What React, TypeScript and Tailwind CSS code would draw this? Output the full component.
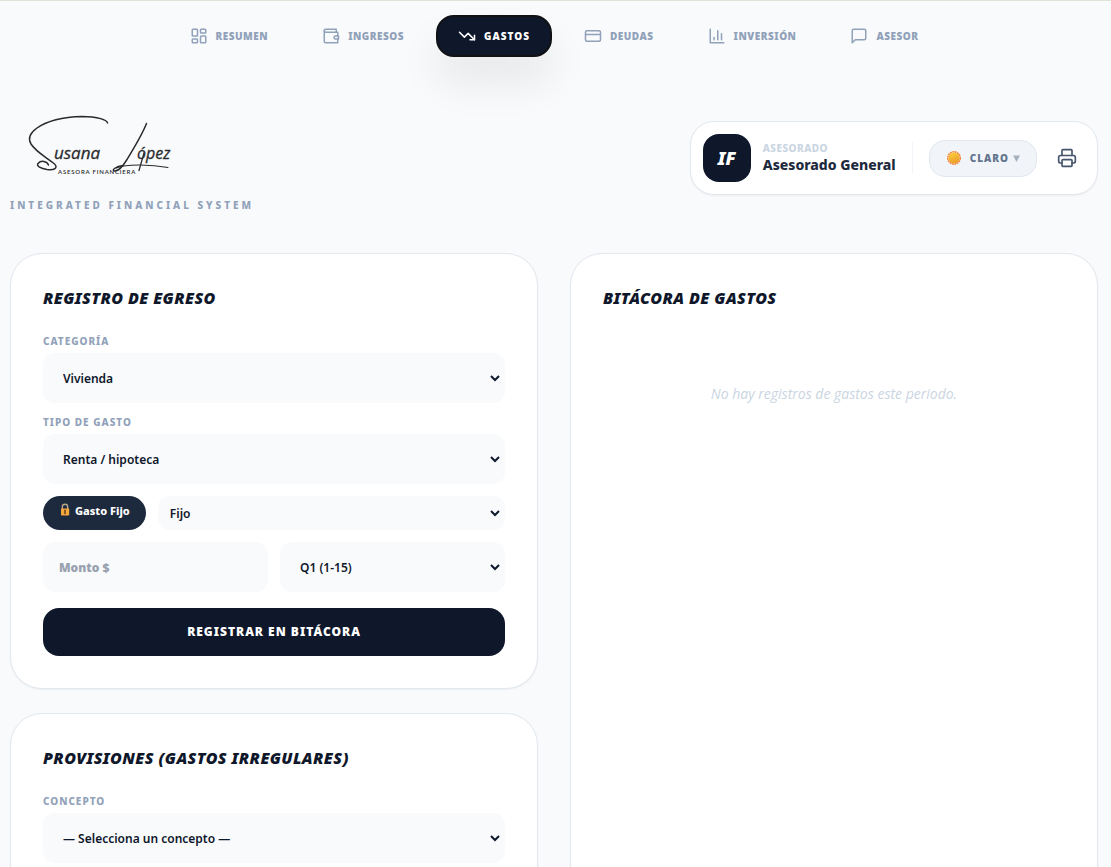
import type { ReactNode } from "react";
import { CreditCard, LayoutDashboard, Printer, TrendingDown } from "lucide-react";

const iconProps = {
  width: 18,
  height: 18,
  viewBox: "0 0 24 24",
  fill: "none",
  stroke: "currentColor",
  strokeWidth: 2,
  strokeLinecap: "round" as const,
  strokeLinejoin: "round" as const,
  "aria-hidden": true,
};

function WalletIcon() {
  return (
    <svg {...iconProps}>
      <path d="M21 12V7H5a2 2 0 0 1 0-4h14v4" />
      <path d="M3 5v14a2 2 0 0 0 2 2h16v-5" />
      <path d="M18 12a2 2 0 0 0 0 4h4v-4Z" />
    </svg>
  );
}

function ChartIcon() {
  return (
    <svg {...iconProps}>
      <path d="M3 3v18h18" />
      <path d="M8 17v-3" />
      <path d="M13 17V5" />
      <path d="M18 17V9" />
    </svg>
  );
}

function MessageIcon() {
  return (
    <svg {...iconProps}>
      <path d="M21 15a2 2 0 0 1-2 2H7l-4 4V5a2 2 0 0 1 2-2h14a2 2 0 0 1 2 2z" />
    </svg>
  );
}

function SunIcon() {
  return (
    <svg width="16" height="16" viewBox="0 0 16 16" aria-hidden="true">
      <defs>
        <linearGradient id="sun" x1="0" y1="0" x2="0.4" y2="1">
          <stop offset="0" stopColor="#fdd23c" />
          <stop offset="1" stopColor="#eba02c" />
        </linearGradient>
      </defs>
      <circle cx="8" cy="8" r="6.2" fill="none" stroke="#f5843a" strokeWidth="1.6" strokeDasharray="1.9 0.535" />
      <circle cx="8" cy="8" r="5.6" fill="url(#sun)" />
    </svg>
  );
}

function LockIcon() {
  return (
    <svg width="12" height="14" viewBox="0 0 12 14" aria-hidden="true">
      <path d="M3.3 6V4a2.7 2.7 0 0 1 5.4 0v2" fill="none" stroke="#b9a58c" strokeWidth="1.4" />
      <rect x="2" y="5.4" width="8.2" height="7.2" rx="0.8" fill="#f5a83c" />
      <path d="M6 7.4v3" stroke="#6b4420" strokeWidth="1.6" strokeLinecap="round" />
    </svg>
  );
}

function Logo() {
  return (
    <svg width="176" height="90" viewBox="0 0 176 90" role="img" aria-label="Susana López, asesora financiera">
      <g fill="none" stroke="#2b2b2d" strokeLinecap="round" strokeLinejoin="round">
        <path
          strokeWidth="1.5"
          d="M97.500 20C97 17 88 13.500 72 13.500C54 14 37 18 27 25C20 30 17.500 35 21 41C26 49 36 54 44 60.500C49 65 44 67.500 37 66.500C31 65.500 26 63 28 60.500C31 57 37 58 38.500 62"
        />
        <path
          strokeWidth="1.5"
          d="M136.500 20.500C132 32 124 45 117 56.500C113 63 108 68.500 104.500 68C101 67 106 63.500 113 62.500"
        />
        <path strokeWidth="1.1" d="M106 65C116 61 140 61 158 64.500" />
        <path strokeWidth="1.3" d="M134 50L129 67.500" />
      </g>
      <g fill="#2b2b2d" stroke="#2b2b2d" strokeWidth="0.3" className="italic [font-family:'Open_Sans',sans-serif]">
        <text x="44" y="56" fontSize="17">usana</text>
        <text x="127" y="56" fontSize="16">ópez</text>
      </g>
      <text x="48" y="71" fontSize="6" letterSpacing="0.8" fill="#2b2b2d" className="font-semibold [font-family:Lato,sans-serif]">
        ASESORA FINANCIERA
      </text>
    </svg>
  );
}

const tabs: { label: string; icon: ReactNode; active?: boolean }[] = [
  { label: "Resumen", icon: <LayoutDashboard size={18} /> },
  { label: "Ingresos", icon: <WalletIcon /> },
  { label: "Gastos", icon: <TrendingDown size={18} />, active: true },
  { label: "Deudas", icon: <CreditCard size={18} /> },
  { label: "Inversión", icon: <ChartIcon /> },
  { label: "Asesor", icon: <MessageIcon /> },
];

function Card({ title, children }: { title: string; children?: ReactNode }) {
  return (
    <section className="rounded-[32px] border border-slate-200 bg-white p-8 shadow-[0_1px_2px_0_rgba(0,0,0,0.05)]">
      <h2 className="mb-6 text-base leading-6 font-black tracking-wide text-slate-900 uppercase italic">{title}</h2>
      {children}
    </section>
  );
}

function SelectField({ id, label, options }: { id: string; label: string; options: string[] }) {
  return (
    <div className="flex flex-col gap-1">
      <label htmlFor={id} className="text-[10px] leading-[15px] font-extrabold tracking-[1px] text-slate-400 uppercase">
        {label}
      </label>
      <select
        id={id}
        className="h-[50px] w-full rounded-xl border-r-2 border-transparent bg-slate-50 px-4 text-xs font-semibold text-slate-900"
      >
        {options.map((o) => (
          <option key={o}>{o}</option>
        ))}
      </select>
    </div>
  );
}

export default function App() {
  return (
    <div className="min-h-screen border-t border-[#dfe3d3] bg-slate-50 pr-[13px] pl-2.5 text-slate-900 [font-family:'Noto_Sans','Open_Sans',sans-serif]">
      <nav className="flex justify-center gap-2.5 pt-3.5">
        {tabs.map((t) => (
          <button
            key={t.label}
            type="button"
            className={
              t.active
                ? "flex h-[42px] items-center gap-2 rounded-[18px] border-2 border-[#101114] bg-slate-900 px-5 text-[10px] font-black tracking-[1px] text-white uppercase shadow-[0_25px_40px_0_rgba(0,0,0,0.08)]"
                : "flex h-[42px] items-center gap-2 rounded-[18px] border-2 border-transparent px-5 text-[10px] font-black tracking-wider text-slate-400 uppercase"
            }
          >
            {t.icon}
            {t.label}
          </button>
        ))}
      </nav>

      <header className="mt-[46px] flex items-center justify-between">
        <div className="flex flex-col gap-[5px]">
          <Logo />
          <p className="text-[10px] leading-[15px] font-extrabold tracking-[3px] text-slate-400 uppercase">
            Integrated Financial System
          </p>
        </div>
        <div className="flex items-center rounded-3xl border border-slate-200 bg-white p-3 shadow-[0_1px_2px_0_rgba(0,0,0,0.05)]">
          <div className="flex size-12 items-center justify-center rounded-2xl bg-slate-900 text-lg font-black text-white italic">
            IF
          </div>
          <div className="ml-3 pr-4">
            <p className="text-[10px] leading-[14px] font-extrabold tracking-wider text-slate-300 uppercase">Asesorado</p>
            <p className="text-sm leading-5 font-extrabold text-slate-800">Asesorado General</p>
          </div>
          <div className="h-8 border-l border-slate-100" />
          <button
            type="button"
            className="ml-4 flex h-[37px] items-center gap-2 rounded-2xl border border-slate-200 bg-slate-100 px-4 text-[10px] font-black tracking-[1px] text-slate-500 uppercase"
          >
            <SunIcon />
            Claro
            <svg width="7" height="7" viewBox="0 0 7 7" fill="#a6b0bf" aria-hidden="true" className="-ml-1">
              <path d="M0 0.500h7L3.500 7z" />
            </svg>
          </button>
          <button type="button" aria-label="Imprimir" className="ml-3 p-2 text-slate-600">
            <Printer size={20} />
          </button>
        </div>
      </header>

      <main className="mt-10 grid grid-cols-2 gap-8">
        <div className="flex flex-col gap-6">
          <Card title="Registro de egreso">
            <form className="flex flex-col gap-3">
              <SelectField id="categoria" label="Categoría" options={["Vivienda"]} />
              <SelectField id="tipo" label="Tipo de gasto" options={["Renta / hipoteca"]} />
              <div className="flex gap-3">
                <span className="flex h-[34px] shrink-0 items-start gap-1 rounded-full bg-slate-800 px-4 pt-[7px] text-[11px] leading-[15px] font-extrabold text-white">
                  <LockIcon />
                  Gasto Fijo
                </span>
                <select
                  aria-label="Fijo o variable"
                  className="min-w-0 grow rounded-xl border-r-2 border-transparent bg-slate-50 px-2 text-xs font-semibold"
                >
                  <option>Fijo</option>
                </select>
              </div>
              <div className="grid grid-cols-2 gap-3">
                <input
                  aria-label="Monto"
                  placeholder="Monto $"
                  className="h-[50px] min-w-0 rounded-xl bg-slate-50 px-4 text-xs font-black placeholder:text-gray-400"
                />
                <select
                  aria-label="Quincena"
                  className="h-[50px] min-w-0 rounded-xl border-r-2 border-transparent bg-slate-50 px-4 text-xs font-semibold"
                >
                  <option>Q1 (1-15)</option>
                </select>
              </div>
              <button
                type="button"
                className="mt-1 h-12 rounded-2xl bg-slate-900 text-xs font-black tracking-[1px] text-white uppercase"
              >
                Registrar en bitácora
              </button>
            </form>
          </Card>
          <Card title="Provisiones (gastos irregulares)">
            <SelectField id="concepto" label="Concepto" options={["— Selecciona un concepto —"]} />
          </Card>
        </div>
        <Card title="Bitácora de gastos">
          <p className="pt-12 text-center text-sm leading-6 text-slate-300 italic [font-family:'Open_Sans',sans-serif]">
            No hay registros de gastos este periodo.
          </p>
        </Card>
      </main>
    </div>
  );
}
